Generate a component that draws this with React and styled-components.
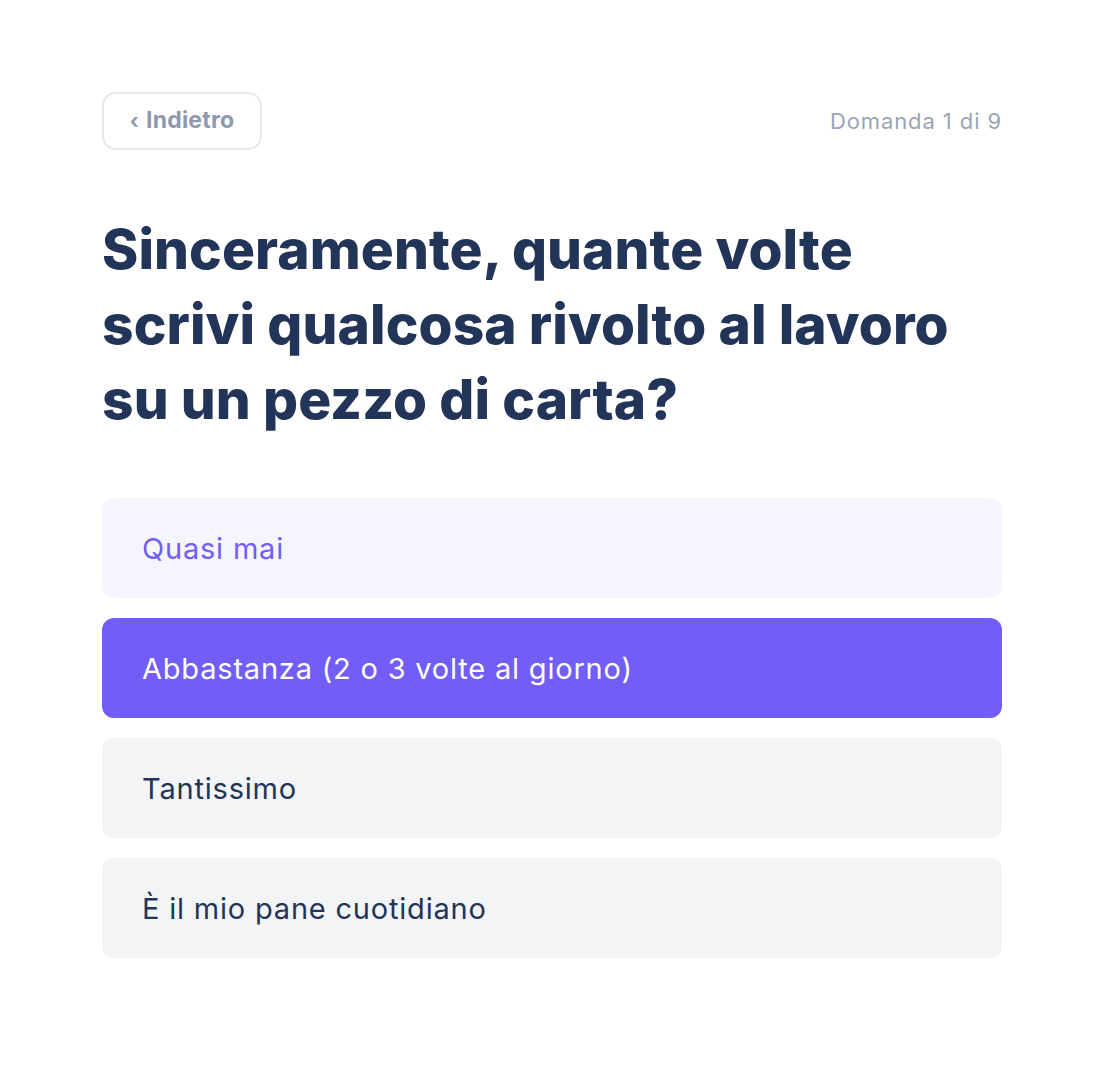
import React, { useState } from "react";
import styled, { createGlobalStyle } from "styled-components";

const Global = createGlobalStyle`
  html, body { margin: 0; padding: 0; background: #ffffff; }
  body { font-family: Inter, "Open Sans", sans-serif; -webkit-font-smoothing: antialiased; }
  * { box-sizing: border-box; }
`;

const Page = styled.main`
  padding: 92px 100px 110px 102px;
`;

const TopBar = styled.div`
  display: flex;
  align-items: center;
  justify-content: space-between;
  height: 58px;
`;

const BackButton = styled.button`
  height: 58px;
  width: 160px;
  border: 2px solid #e6e8ed;
  border-radius: 14px;
  background: #fff;
  color: #8e99b0;
  font-family: inherit;
  font-weight: 700;
  font-size: 23px;
  letter-spacing: 0.2px;
  display: flex;
  align-items: center;
  justify-content: center;
  gap: 7px;
  cursor: pointer;
  padding: 0 0 2px;
`;

const Chevron = styled.span`
  font-size: 21px;
`;

const Counter = styled.span`
  color: #9aa4b7;
  font-size: 22px;
  letter-spacing: 0.9px;
`;

const Question = styled.h1`
  margin: 62px 0 0;
  color: #233459;
  font-weight: 800;
  font-size: 55px;
  line-height: 75px;
  letter-spacing: 0.1px;
  max-width: 860px;
`;

const Options = styled.div`
  margin-top: 61px;
  display: flex;
  flex-direction: column;
  gap: 20px;
`;

const Option = styled.button`
  height: 100px;
  width: 100%;
  border: none;
  border-radius: 12px;
  padding: 0 40px;
  text-align: left;
  font-family: inherit;
  font-size: 29px;
  letter-spacing: 0.8px;
  cursor: pointer;
  background: ${(p) => (p.$selected ? "#725df6" : p.$soft ? "#f5f5fe" : "#f3f4f6")};
  color: ${(p) => (p.$selected ? "#ffffff" : p.$soft ? "#725df6" : "#233459")};
`;

const answers = [
  "Quasi mai",
  "Abbastanza (2 o 3 volte al giorno)",
  "Tantissimo",
  "È il mio pane cuotidiano",
];

export default function App() {
  const [selected, setSelected] = useState(1);
  return (
    <>
      <Global />
      <Page>
        <TopBar>
          <BackButton>
            <Chevron>‹</Chevron>
            <span>Indietro</span>
          </BackButton>
          <Counter>Domanda 1 di 9</Counter>
        </TopBar>
        <Question>
          Sinceramente, quante volte scrivi qualcosa rivolto al lavoro su un pezzo di carta?
        </Question>
        <Options>
          {answers.map((a, i) => (
            <Option key={a} $selected={i === selected} $soft={i === 0} onClick={() => setSelected(i)}>
              {a}
            </Option>
          ))}
        </Options>
      </Page>
    </>
  );
}
